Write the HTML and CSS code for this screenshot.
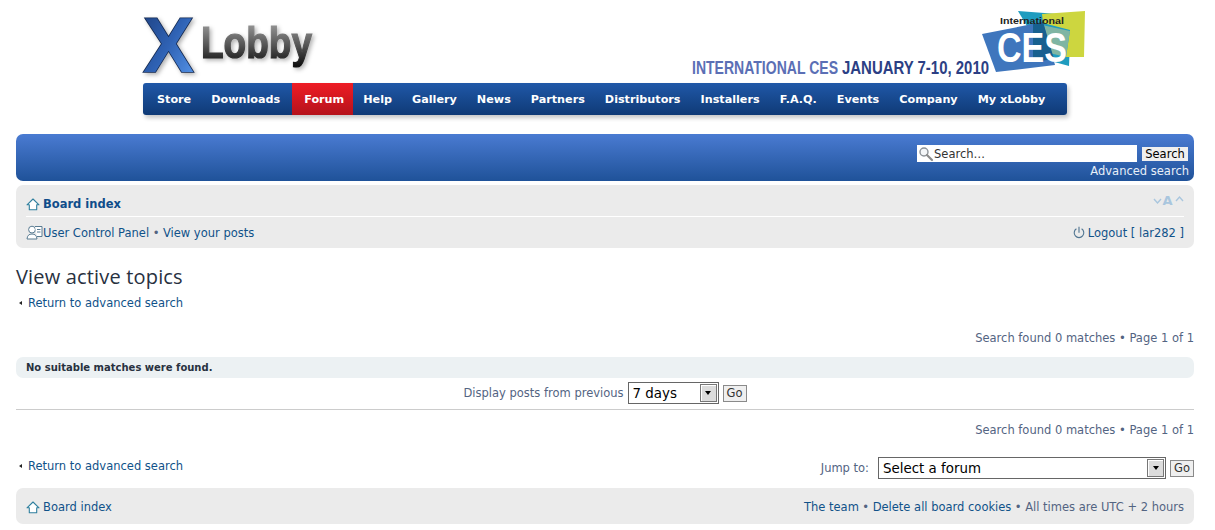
FILE: index.html
```
<!DOCTYPE html>
<html lang="en">
<head>
<meta charset="utf-8">
<title>xLobby - View active topics</title>
<link rel="stylesheet" href="styles.css">
</head>
<body>
<header class="banner">
  <div class="banner-top">
    <svg class="logo" width="176" height="62" viewBox="0 0 176 62" role="img" aria-label="xLobby">
      <defs>
        <linearGradient id="xfill" x1="0" y1="0" x2="1" y2="1">
          <stop offset="0" stop-color="#1d3f7e"/>
          <stop offset="0.5" stop-color="#2f62b4"/>
          <stop offset="1" stop-color="#5a9aee"/>
        </linearGradient>
        <linearGradient id="lobbyfill" x1="0" y1="0" x2="0" y2="1">
          <stop offset="0" stop-color="#a8a8a8"/>
          <stop offset="0.55" stop-color="#555"/>
          <stop offset="1" stop-color="#0c0c0c"/>
        </linearGradient>
      </defs>
      <text class="logo-x" x="3" y="58" textLength="51" lengthAdjust="spacingAndGlyphs" fill="url(#xfill)" stroke="#10264f" stroke-width="1.6" paint-order="stroke">X</text>
      <text class="logo-word" x="61" y="44" textLength="111" lengthAdjust="spacingAndGlyphs" fill="url(#lobbyfill)" stroke="url(#lobbyfill)" stroke-width="1.2">Lobby</text>
    </svg>
    <svg class="slogan" width="297" height="22" viewBox="0 0 297 22" role="img" aria-label="International CES January 7-10, 2010">
      <text class="slogan-a" x="0" y="16" textLength="146" lengthAdjust="spacingAndGlyphs">INTERNATIONAL CES</text>
      <text class="slogan-b" x="150" y="16" textLength="147" lengthAdjust="spacingAndGlyphs">JANUARY 7-10, 2010</text>
    </svg>
    <svg class="ces" width="106" height="66" viewBox="0 0 106 66" role="img" aria-label="International CES">
      <polygon points="37,1 90,5 88,56 66,50" fill="#1f9cbf"/>
      <polygon points="61,4 104,1 103,47 85,47 89,20 62,13" fill="#cdd63f"/>
      <polygon points="61,15 89,21 85,47 64,42" fill="#7fb5a3"/>
      <polygon points="1,24 62,12 74,55 15,62" fill="#3f76bd"/>
      <polygon points="52,14 62,12 73,49 66,50 52,52" fill="#17608f"/>
      <text class="ces-small" x="19" y="14" textLength="64" lengthAdjust="spacingAndGlyphs">International</text>
      <text class="ces-big" x="16" y="52" textLength="70" lengthAdjust="spacingAndGlyphs">CES</text>
    </svg>
  </div>
  <nav class="menu">
    <a href="#">Store</a>
    <a href="#">Downloads</a>
    <a href="#" class="active">Forum</a>
    <a href="#">Help</a>
    <a href="#">Gallery</a>
    <a href="#">News</a>
    <a href="#">Partners</a>
    <a href="#">Distributors</a>
    <a href="#">Installers</a>
    <a href="#">F.A.Q.</a>
    <a href="#">Events</a>
    <a href="#">Company</a>
    <a href="#">My xLobby</a>
  </nav>
</header>

<section class="searchbar">
  <form class="search-row">
    <div class="search-field">
      <svg width="16" height="16" viewBox="0 0 16 16" aria-hidden="true">
        <circle cx="6" cy="6" r="4" fill="#f4f6f8" stroke="#8c9298" stroke-width="1.4"/>
        <path d="M9 9l5 5" stroke="#8b8b8b" stroke-width="2.2" stroke-linecap="round"/>
      </svg>
      <input class="search-input" type="text" value="Search…">
    </div>
    <button class="search-btn" type="button">Search</button>
  </form>
  <a class="adv" href="#">Advanced search</a>
</section>

<section class="panel navpanel">
  <div class="nav-row first">
    <a href="#" class="crumb">
      <svg class="ico" width="14" height="13" viewBox="0 0 14 13" aria-hidden="true"><path d="M1 6.800 7 1l6 5.800h-2.300v5H3.300v-5z" fill="#fff" stroke="#2f7f9e" stroke-width="1.100" stroke-linejoin="round"/></svg>
      <strong>Board index</strong>
    </a>
    <svg class="fontsize" width="31" height="13" viewBox="0 0 31 13" aria-label="Change font size">
      <path d="M1 5l3.500 4L8 5" fill="none" stroke="#a9c6de" stroke-width="1.400"/>
      <path d="M23 7l3.500-4L30 7" fill="none" stroke="#a9c6de" stroke-width="1.400"/>
      <text class="fs-a" x="9.500" y="11">A</text>
    </svg>
  </div>
  <div class="nav-row">
    <div class="left-links">
      <svg class="ico-ucp" width="17" height="15" viewBox="0 0 17 15" aria-hidden="true"><circle cx="6" cy="4.600" r="3.400" fill="#fff" stroke="#5a7c92"/><path d="M1 14c.4-3.600 2-5 5-5s4.600 1.400 5 5z" fill="#fff" stroke="#5a7c92"/><path d="M9 1.500h7v10H11" fill="#fff" stroke="#5a7c92"/><path d="M11 4.500h3.500M11 7h3.500" stroke="#5a7c92"/></svg><a href="#">User Control Panel</a><span class="bull">•</span><a href="#">View your posts</a>
    </div>
    <div class="right-links">
      <svg class="ico-power" width="12" height="13" viewBox="0 0 12 13" aria-hidden="true"><path d="M3.400 2.800a4.800 4.800 0 1 0 5.200 0" fill="none" stroke="#4f7490" stroke-width="1.100"/><path d="M6 .8v6" stroke="#4f7490" stroke-width="1.100"/></svg>
      <a href="#">Logout [ lar282 ]</a>
    </div>
  </div>
</section>

<main>
  <h2 class="title">View active topics</h2>
  <p class="back first-back"><span class="arrow"></span><a href="#">Return to advanced search</a></p>
  <div class="pagination top-pag">Search found 0 matches • Page <b>1</b> of <b>1</b></div>
  <div class="notice">No suitable matches were found.</div>
  <form class="sort">
    <label class="sort-label" for="days">Display posts from previous</label>
    <span class="selectbox days"><select id="days"><option>7 days</option></select><span class="sel-arrow"><i></i></span></span>
    <button class="go" type="button">Go</button>
  </form>
  <hr class="rule">
  <div class="pagination">Search found 0 matches • Page <b>1</b> of <b>1</b></div>
  <div class="jump-row">
    <p class="back"><span class="arrow"></span><a href="#">Return to advanced search</a></p>
    <form class="jump">
      <label class="sort-label" for="forum">Jump to:</label>
      <span class="selectbox forum"><select id="forum"><option>Select a forum</option></select><span class="sel-arrow"><i></i></span></span>
      <button class="go" type="button">Go</button>
    </form>
  </div>
</main>

<footer class="panel footpanel">
  <a href="#" class="crumb">
    <svg class="ico" width="14" height="13" viewBox="0 0 14 13" aria-hidden="true"><path d="M1 6.800 7 1l6 5.800h-2.300v5H3.300v-5z" fill="#fff" stroke="#2f7f9e" stroke-width="1.100" stroke-linejoin="round"/></svg>
    <span>Board index</span>
  </a>
  <div class="foot-links"><a href="#">The team</a><span class="bull">•</span><a href="#">Delete all board cookies</a><span class="bull">•</span><span class="muted">All times are UTC + 2 hours</span></div>
</footer>
</body>
</html>
```

FILE: styles.css
```
* { box-sizing: border-box; }
html, body { margin: 0; padding: 0; }
body {
  background: #fff;
  color: #536482;
  font: 11.5px/14px "DejaVu Sans", Verdana, sans-serif;
  padding: 0 21px 0 16px;
  height: 530px;
  overflow: hidden;
}
a { color: #105289; text-decoration: none; }

/* banner */
.banner { height: 120px; margin-bottom: 14px; padding-left: 127px; }
.banner-top { height: 83px; display: flex; align-items: flex-start; width: 950px; }
.logo { margin: 14px 0 0 -3px; flex: none; filter: drop-shadow(2px 2px 2px rgba(0, 0, 0, .3)); }
.logo-x { font: 700 77px "Liberation Sans", sans-serif; }
.logo-word { font: 700 44px "Liberation Sans", sans-serif; }
.slogan { margin: 58px 0 0 376px; flex: none; }
.slogan-a, .slogan-b { font: 700 18px "Liberation Sans", sans-serif; }
.slogan-a { fill: #5b6fb5; }
.slogan-b { fill: #2c3f84; }
.ces { margin: 10px 0 0 -8px; flex: none; }
.ces-small { font: 700 9.5px "Liberation Sans", sans-serif; fill: #222; }
.ces-big { font: 700 42px "Liberation Sans", sans-serif; fill: #fff; }

.menu {
  display: flex;
  width: 924px;
  height: 32px;
  padding-left: 4px;
  border-radius: 3px;
  background: linear-gradient(#2058a8, #0f3a76);
  box-shadow: 2px 3px 4px rgba(0, 0, 0, .22);
}
.menu a {
  padding: 2px 10px 0;
  color: #fff;
  font: 700 11.2px/30px "DejaVu Sans", sans-serif;
  white-space: nowrap;
}
.menu a.active {
  margin-left: 2px;
  padding: 2px 9px 0 12px;
  background: linear-gradient(#ee1c25, #b5121b);
}

/* search */
.searchbar {
  height: 47px;
  padding: 11px 5px 0 0;
  border-radius: 7px;
  background: linear-gradient(#4a7bd2, #1f5299);
  display: flex;
  flex-direction: column;
  align-items: flex-end;
}
.search-row { display: flex; align-items: center; height: 17px; margin: 0 1px 0 0; gap: 5px; }
.search-field { width: 220px; height: 17px; background: #fff; display: flex; align-items: center; padding-left: 1px; }
.search-input { flex: 1; min-width: 0; border: 0; padding: 1px 0 0 0; background: transparent; color: #333; font: 11.5px "DejaVu Sans", sans-serif; outline: 0; }
.search-btn { width: 46px; height: 14px; padding: 0; border: 0; background: #efefef; color: #000; font: 11.5px/14px "DejaVu Sans", sans-serif; }
.adv { color: #e8eff8; line-height: 14px; margin-top: 2px; }

/* panels */
.panel { background: #ebebeb; border-radius: 7px; }
.navpanel { margin-top: 4px; height: 63px; padding: 0 10px; }
.nav-row { display: flex; justify-content: space-between; align-items: center; height: 31px; }
.nav-row.first { height: 32px; border-bottom: 1px solid #fff; padding-top: 7px; }
.crumb { display: flex; align-items: center; gap: 3px; }
.crumb strong { font-weight: 700; color: #0f4d8a; }
.ico { flex: none; }
.fontsize { margin-top: -8px; }
.fs-a { font: 700 13px "DejaVu Sans", sans-serif; fill: #a9c6de; }
.left-links, .right-links { display: flex; align-items: center; }
.ico-power { margin-right: 3px; }
.bull { margin: 0 3.5px; color: #536482; }

/* content */
.title { margin: 17px 0 0; color: #28313f; font: 400 20px/24px "Open Sans", sans-serif; letter-spacing: .17px; }
.back { margin: 0; display: flex; align-items: center; }
.first-back { margin-top: 7px; }
.arrow { width: 12px; height: 14px; flex: none; }
.arrow::before {
  content: "";
  display: block;
  width: 0;
  height: 0;
  margin: 5px 0 0 3px;
  border: 2.500px solid transparent;
  border-left-width: 0;
  border-right: 3px solid #222;
}
.pagination { text-align: right; line-height: 14px; }
.pagination b { font-weight: 400; }
.top-pag { margin-top: 21px; }
.notice {
  margin-top: 12px;
  height: 21px;
  padding: 0 10px;
  border-radius: 7px;
  background: #ecf1f3;
  color: #28313f;
  font: 700 10px/21px "DejaVu Sans", sans-serif;
}
.sort { display: flex; justify-content: center; align-items: center; gap: 4px; height: 24px; margin-top: 3px; }
.sort-label { color: #536482; }
.selectbox { display: inline-flex; align-items: stretch; height: 22px; border: 1px solid #666; background: #fff; padding: 1px; }
.selectbox select {
  flex: 1;
  min-width: 0;
  appearance: none;
  -webkit-appearance: none;
  border: 0;
  padding: 0 0 0 3px;
  background: #fff;
  color: #000;
  font: 13.4px "DejaVu Sans", sans-serif;
  outline: 0;
}
.days { width: 91px; }
.forum { width: 288px; }
.sel-arrow { width: 17px; background: #dcdcdc; border: 1px solid #777; box-shadow: inset 1px 1px 0 #fff; display: flex; align-items: center; justify-content: center; flex: none; }
.sel-arrow i { display: block; width: 0; height: 0; border: 3.500px solid transparent; border-top: 4px solid #000; border-bottom: 0; }
.go { width: 24px; height: 17px; padding: 0; border: 1px solid #8a8a8a; background: #efefef; color: #333; font: 11.5px/14px "DejaVu Sans", sans-serif; }
.rule { margin: 4px 0 0; border: 0; border-top: 1px solid #ccc; }
.rule + .pagination { margin-top: 13px; }
.jump-row { display: flex; justify-content: space-between; align-items: flex-start; margin-top: 22px; }
.jump { display: flex; align-items: center; gap: 4px; margin-top: -2px; }
.jump .sort-label { margin-right: 5px; }
.footpanel { margin-top: 9px; height: 36px; padding: 2px 10px 0; display: flex; justify-content: space-between; align-items: center; }
.crumb span { color: #105289; }
.muted { color: #536482; }
```
